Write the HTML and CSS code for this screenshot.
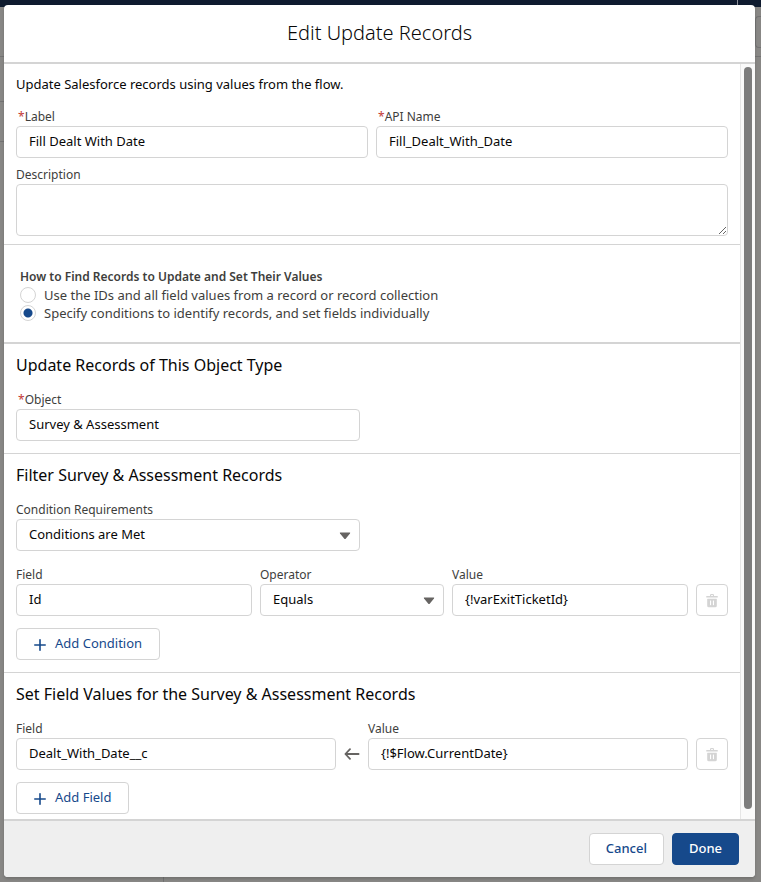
FILE: index.html
```
<!DOCTYPE html>
<html lang="en">
<head>
<meta charset="utf-8">
<title>Edit Update Records</title>
<meta name="viewport" content="width=device-width, initial-scale=1">
<link rel="stylesheet" href="styles.css">
</head>
<body>
<svg class="sprite" aria-hidden="true">
  <symbol id="icon-plus" viewBox="0 0 12 12"><path d="M6 .8v10.4M.8 6h10.4" fill="none" stroke="currentColor" stroke-width="1.6" stroke-linecap="round"/></symbol>
  <symbol id="icon-down" viewBox="0 0 12 8"><path d="M1.3.5h9.4q.9.2.3 1L6.5 6.9q-.5.4-1 0L1 1.500q-.6-.8.3-1z" fill="currentColor"/></symbol>
  <symbol id="icon-trash" viewBox="0 0 12 14"><path fill="currentColor" fill-rule="evenodd" d="M4 2V1.200Q4 0 5.200 0h1.600Q8 0 8 1.200V2h3.300q.5 0 .5.500v.4q0 .5-.5.5H.7q-.5 0-.5-.5v-.4Q.2 2 .7 2zM5.100 2h1.800v-.6q0-.3-.3-.3H5.400q-.3 0-.3.3zM1.600 4.700h8.800q.4 0 .4.400v6.700q0 1.500-1.500 1.500H2.700q-1.500 0-1.500-1.500V5.100q0-.4.4-.4zM4 6.800v4q0 .4.4.4h.3q.4 0 .4-.4v-4q0-.4-.4-.4h-.3q-.4 0-.4.400zM6.900 6.800v4q0 .4.4.4h.3q.4 0 .4-.4v-4q0-.4-.4-.4h-.3q-.4 0-.4.4z"/></symbol>
  <symbol id="icon-back" viewBox="0 0 16 12"><path d="M14.600 6H1.700M6 1.200 1.400 6 6 10.800" fill="none" stroke="currentColor" stroke-width="1.800" stroke-linecap="round" stroke-linejoin="round"/></symbol>
</svg>

<div class="backdrop" aria-hidden="true">
  <div class="appbar"><span class="appbar-mark"></span></div>
  <div class="toolbar"><span class="toolbar-button"></span></div>
  <div class="workspace">
    <div class="sidebar"><span class="side-tabs"></span><span class="side-search"></span></div>
  </div>
</div>

<div class="modal" role="dialog" aria-labelledby="dialog-title">
  <header class="modal-header"><h1 id="dialog-title">Edit Update Records</h1></header>
  <div class="modal-body">
    <form class="content" id="update-form">
      <section class="section intro">
        <p>Update Salesforce records using values from the flow.</p>
        <div class="row two">
          <div class="field">
            <label class="required" for="label"><span class="star">*</span>Label</label>
            <input id="label" type="text" value="Fill Dealt With Date">
          </div>
          <div class="field">
            <label class="required" for="api"><span class="star">*</span>API Name</label>
            <input id="api" type="text" value="Fill_Dealt_With_Date">
          </div>
        </div>
        <div class="field description">
          <label for="description">Description</label>
          <textarea id="description"></textarea>
        </div>
      </section>

      <section class="section choice">
        <fieldset>
          <legend>How to Find Records to Update and Set Their Values</legend>
          <label class="radio"><input type="radio" name="method">Use the IDs and all field values from a record or record collection</label>
          <label class="radio"><input type="radio" name="method" checked>Specify conditions to identify records, and set fields individually</label>
        </fieldset>
      </section>

      <section class="section">
        <h2>Update Records of This Object Type</h2>
        <div class="field half">
          <label class="required" for="object"><span class="star">*</span>Object</label>
          <input id="object" type="text" value="Survey &amp; Assessment">
        </div>
      </section>

      <section class="section">
        <h2>Filter Survey &amp; Assessment Records</h2>
        <div class="field half">
          <label for="requirements">Condition Requirements</label>
          <div class="select">
            <select id="requirements"><option>Conditions are Met</option></select>
            <svg><use href="#icon-down"/></svg>
          </div>
        </div>
        <div class="row condition">
          <div class="field">
            <label for="filter-field">Field</label>
            <input id="filter-field" type="text" value="Id">
          </div>
          <div class="field">
            <label for="operator">Operator</label>
            <div class="select">
              <select id="operator"><option>Equals</option></select>
              <svg><use href="#icon-down"/></svg>
            </div>
          </div>
          <div class="field">
            <label for="filter-value">Value</label>
            <input id="filter-value" type="text" value="{!varExitTicketId}">
          </div>
          <button class="button icon-button" type="button" aria-label="Delete condition" disabled><svg><use href="#icon-trash"/></svg></button>
        </div>
        <button class="button add" type="button"><svg><use href="#icon-plus"/></svg>Add Condition</button>
      </section>

      <section class="section">
        <h2>Set Field Values for the Survey &amp; Assessment Records</h2>
        <div class="row assignment">
          <div class="field">
            <label for="set-field">Field</label>
            <input id="set-field" type="text" value="Dealt_With_Date__c">
          </div>
          <span class="arrow"><svg><use href="#icon-back"/></svg></span>
          <div class="field">
            <label for="set-value">Value</label>
            <input id="set-value" type="text" value="{!$Flow.CurrentDate}">
          </div>
          <button class="button icon-button" type="button" aria-label="Delete field" disabled><svg><use href="#icon-trash"/></svg></button>
        </div>
        <button class="button add" type="button"><svg><use href="#icon-plus"/></svg>Add Field</button>
      </section>
    </form>
    <div class="scroll-track" aria-hidden="true"><div class="scroll-thumb"></div></div>
  </div>
  <footer class="modal-footer">
    <button class="button" type="button">Cancel</button>
    <button class="button brand" type="submit" form="update-form">Done</button>
  </footer>
</div>
</body>
</html>
```
FILE: styles.css
```
* { box-sizing: border-box; }

body {
  display: flex;
  min-height: 100vh;
  margin: 0;
  padding: 5px 6px 5px 4px;
  background: #888785;
  color: #080707;
  font: 13px/20px "Noto Sans", "Open Sans", sans-serif;
}

h1, h2, p, fieldset, legend { margin: 0; padding: 0; border: 0; }
input, textarea, select, button { font: inherit; }
svg { display: block; }
.sprite { position: absolute; width: 0; height: 0; }

/* Page behind the dialog */
.backdrop {
  position: absolute;
  inset: 0;
  display: flex;
  flex-direction: column;
  overflow: hidden;
}
.appbar {
  display: flex;
  justify-content: flex-end;
  height: 7px;
  padding-right: 23px;
  background: #0f1b2f;
}
.appbar-mark { width: 1px; background: #8d9099; }
.toolbar {
  display: flex;
  justify-content: flex-end;
  height: 50px;
  padding-top: 9px;
  border-bottom: 1px solid #737373;
}
.toolbar-button {
  width: 6px;
  height: 32px;
  border: 1px solid #737373;
  border-right: 0;
  border-radius: 4px 0 0 4px;
}
.workspace { display: flex; flex: 1; }
.sidebar { width: 164px; border-right: 1px solid #737373; }
.side-tabs, .side-search { display: block; border-bottom: 1px solid #737373; }
.side-tabs { height: 45px; }
.side-search { height: 40px; }

/* Dialog */
.modal {
  position: relative;
  display: flex;
  flex: 1;
  flex-direction: column;
  min-width: 0;
  border-radius: 4px;
  background: #fff;
  box-shadow: 0 2px 3px rgba(0, 0, 0, .16);
  overflow: hidden;
}
.modal-header {
  padding: 13px 16px 14px;
  border-bottom: 2px solid #d4d4d4;
  text-align: center;
}
.modal-header h1 { font-size: 20px; line-height: 30px; font-weight: 300; }
.modal-body { display: flex; flex: 1; }
.content { flex: 1; min-width: 0; }

.section { padding: 9px 12px 12px; border-bottom: 1px solid #d4d4d4; }
.section:last-child { padding-bottom: 5px; border-bottom: 0; }
.section h2 { margin-bottom: 14px; font-size: 16px; line-height: 24px; font-weight: 400; }
.intro { padding-top: 10px; padding-bottom: 8px; }
.intro p { margin-bottom: 14px; }
.choice { padding: 22px 16px 20px; border-bottom-width: 2px; }

.row { display: grid; gap: 8px; align-items: end; }
.two { grid-template-columns: 1fr 1fr; }
.condition { grid-template-columns: 236fr 184fr 236fr 32px; margin-top: 15px; }
.assignment { grid-template-columns: 1fr 16px 1fr 32px; }
.half { width: calc(50% - 12px); }
.description { margin-top: 8px; }

.field { min-width: 0; }
.field label { display: block; color: #3e3e3c; font-size: 12px; line-height: 18px; }
.field .required { padding-left: 2px; }
.star { color: #c23934; }

.field input, .field select, .field textarea {
  display: block;
  width: 100%;
  height: 32px;
  padding: 0 12px 2px;
  border: 1px solid #d4d4d4;
  border-radius: 4px;
  outline: 0;
  background: #fff;
  color: #080707;
}
.field textarea { height: 52px; resize: vertical; }
.field select { appearance: none; }
.select { position: relative; }
.select svg {
  position: absolute;
  top: 13px;
  right: 9px;
  width: 12px;
  height: 8px;
  color: #666462;
  pointer-events: none;
}

legend { color: #3e3e3c; font-size: 12px; line-height: 19px; font-weight: 600; }
.radio { display: flex; align-items: center; gap: 8px; height: 18px; color: #3e3e3c; }
.radio input {
  appearance: none;
  flex: none;
  width: 16px;
  height: 16px;
  margin: 0;
  border: 1px solid #d4d4d4;
  border-radius: 50%;
  background: #fff;
}
.radio input:checked { background: radial-gradient(circle, #16498b 4px, #fff 5px); }

.button {
  display: inline-flex;
  align-items: center;
  justify-content: center;
  height: 32px;
  padding: 0 16px 2px;
  border: 1px solid #d4d4d4;
  border-radius: 4px;
  background: #fff;
  color: #16498b;
}
.brand { border-color: #16498b; background: #16498b; color: #fff; }
.add { gap: 9px; margin-top: 12px; padding-right: 17px; vertical-align: top; }
.add svg { width: 12px; height: 12px; margin: 4px 0 0 1px; }
.icon-button { width: 32px; padding: 2px 0 0; color: #d4d4d4; }
.icon-button svg { width: 12px; height: 14px; }
.arrow { display: grid; height: 32px; place-items: center; color: #666462; }
.arrow svg { width: 16px; height: 12px; }

.scroll-track {
  width: 15px;
  padding: 3px 3px 10px;
  border-left: 1px solid #e6e6e6;
  background: #fafafa;
}
.scroll-thumb { width: 8px; height: 100%; border-radius: 4px; background: #7d7d7d; }

.modal-footer {
  display: flex;
  justify-content: flex-end;
  gap: 8px;
  padding: 12px 16px;
  border-top: 2px solid #d4d4d4;
  background: #efefef;
}
.modal-footer .button { font-weight: 500; }
```
